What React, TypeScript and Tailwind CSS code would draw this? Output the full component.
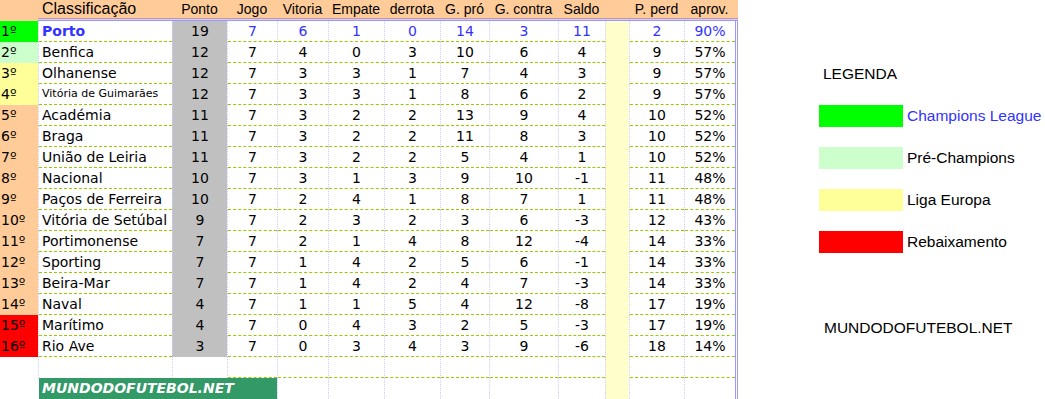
import type { ReactNode } from 'react';

interface TeamRow {
  pos: number;
  name: string;
  stats: number[]; // pontos, jogos, vitorias, empates, derrotas, gols pro, gols contra, saldo
  lost: number;
  pct: string;
  zone: string;
  leader?: boolean;
  small?: boolean;
}

const teams: TeamRow[] = [
  { pos: 1, name: 'Porto', stats: [19, 7, 6, 1, 0, 14, 3, 11], lost: 2, pct: '90%', zone: 'bg-[#00ff00]', leader: true },
  { pos: 2, name: 'Benfica', stats: [12, 7, 4, 0, 3, 10, 6, 4], lost: 9, pct: '57%', zone: 'bg-[#ccffcc]' },
  { pos: 3, name: 'Olhanense', stats: [12, 7, 3, 3, 1, 7, 4, 3], lost: 9, pct: '57%', zone: 'bg-[#ffff99]' },
  { pos: 4, name: 'Vitória de Guimarães', stats: [12, 7, 3, 3, 1, 8, 6, 2], lost: 9, pct: '57%', zone: 'bg-[#ffff99]', small: true },
  { pos: 5, name: 'Académia', stats: [11, 7, 3, 2, 2, 13, 9, 4], lost: 10, pct: '52%', zone: 'bg-[#ffcc99]' },
  { pos: 6, name: 'Braga', stats: [11, 7, 3, 2, 2, 11, 8, 3], lost: 10, pct: '52%', zone: 'bg-[#ffcc99]' },
  { pos: 7, name: 'União de Leiria', stats: [11, 7, 3, 2, 2, 5, 4, 1], lost: 10, pct: '52%', zone: 'bg-[#ffcc99]' },
  { pos: 8, name: 'Nacional', stats: [10, 7, 3, 1, 3, 9, 10, -1], lost: 11, pct: '48%', zone: 'bg-[#ffcc99]' },
  { pos: 9, name: 'Paços de Ferreira', stats: [10, 7, 2, 4, 1, 8, 7, 1], lost: 11, pct: '48%', zone: 'bg-[#ffcc99]' },
  { pos: 10, name: 'Vitória de Setúbal', stats: [9, 7, 2, 3, 2, 3, 6, -3], lost: 12, pct: '43%', zone: 'bg-[#ffcc99]' },
  { pos: 11, name: 'Portimonense', stats: [7, 7, 2, 1, 4, 8, 12, -4], lost: 14, pct: '33%', zone: 'bg-[#ffcc99]' },
  { pos: 12, name: 'Sporting', stats: [7, 7, 1, 4, 2, 5, 6, -1], lost: 14, pct: '33%', zone: 'bg-[#ffcc99]' },
  { pos: 13, name: 'Beira-Mar', stats: [7, 7, 1, 4, 2, 4, 7, -3], lost: 14, pct: '33%', zone: 'bg-[#ffcc99]' },
  { pos: 14, name: 'Naval', stats: [4, 7, 1, 1, 5, 4, 12, -8], lost: 17, pct: '19%', zone: 'bg-[#ffcc99]' },
  { pos: 15, name: 'Marítimo', stats: [4, 7, 0, 4, 3, 2, 5, -3], lost: 17, pct: '19%', zone: 'bg-[#ff0000]' },
  { pos: 16, name: 'Rio Ave', stats: [3, 7, 0, 3, 4, 3, 9, -6], lost: 18, pct: '14%', zone: 'bg-[#ff0000]' },
];

// widths of the stat columns, Ponto first
const statCols = [
  { label: 'Ponto', w: 'w-[55px]' },
  { label: 'Jogo', w: 'w-[50px]' },
  { label: 'Vitoria', w: 'w-[51px]' },
  { label: 'Empate', w: 'w-[56px]' },
  { label: 'derrota', w: 'w-[56px]' },
  { label: 'G. pró', w: 'w-[49px]' },
  { label: 'G. contra', w: 'w-[69px]' },
  { label: 'Saldo', w: 'w-[47px]' },
];

const legend = [
  { label: 'Champions League', bg: 'bg-[#00ff00]', text: 'text-[#3333ff]' },
  { label: 'Pré-Champions', bg: 'bg-[#ccffcc]', text: 'text-black' },
  { label: 'Liga Europa', bg: 'bg-[#ffff99]', text: 'text-black' },
  { label: 'Rebaixamento', bg: 'bg-[#ff0000]', text: 'text-black' },
];

interface CellProps {
  width: string;
  bg?: string;
  line?: boolean;
  align?: 'left' | 'center';
  children?: ReactNode;
}

function Cell({ width, bg = '', line = true, align = 'center', children }: CellProps) {
  return (
    <div className={`${width} h-full shrink-0 border-l border-dotted border-[#ccccff] ${bg}`}>
      <div
        className={`h-full flex items-center whitespace-nowrap ${
          align === 'left' ? 'pl-[3px]' : 'justify-center'
        } ${line ? 'border-b border-dashed border-[#99cc00]' : ''}`}
      >
        {children}
      </div>
    </div>
  );
}

function Header() {
  return (
    <div className="flex h-[21px] w-[738px] bg-[#ffcc99] font-['Liberation_Sans',Arial,sans-serif] text-[14px] text-black">
      <div className="w-[38px] shrink-0" />
      <div className="flex flex-1 border-b-[3px] border-double border-[#9999ff]">
        <div className="w-[134px] shrink-0 pl-[4px] text-[16px] leading-[18px]">Classificação</div>
        {statCols.map((c) => (
          <div key={c.label} className={`${c.w} shrink-0 text-center leading-[18px]`}>
            {c.label}
          </div>
        ))}
        <div className="w-[24px] shrink-0" />
        <div className="w-[55px] shrink-0 text-center leading-[18px]">P. perd</div>
        <div className="w-[51px] shrink-0 text-center leading-[18px]">aprov.</div>
      </div>
    </div>
  );
}

function StandingRow({ team }: { team: TeamRow }) {
  const numColor = team.leader ? 'text-[#3333ff]' : 'text-black';
  return (
    <div className="flex h-[21px]">
      <div className={`w-[38px] h-full shrink-0 pl-[1px] flex items-center ${team.zone}`}>
        {team.pos}º
      </div>
      <Cell width="w-[134px]" align="left">
        {team.leader ? (
          <span className="font-bold text-[#3333ff]">{team.name}</span>
        ) : (
          <span className={team.small ? 'text-[11px]' : ''}>{team.name}</span>
        )}
      </Cell>
      {statCols.map((c, i) => (
        <Cell key={c.label} width={c.w} bg={i === 0 ? 'bg-[#c0c0c0]' : ''} line={i !== 0}>
          <span className={i === 0 ? 'text-black' : numColor}>{team.stats[i]}</span>
        </Cell>
      ))}
      <Cell width="w-[24px]" bg="bg-[#ffffcc]" line={false} />
      <Cell width="w-[55px]">
        <span className={numColor}>{team.lost}</span>
      </Cell>
      <div className="h-full border-r-[3px] border-double border-[#9999ff]">
        <Cell width="w-[51px]">
          <span className={numColor}>{team.pct}</span>
        </Cell>
      </div>
    </div>
  );
}

export default function App() {
  return (
    <div className="w-[1045px] h-[399px] overflow-hidden bg-white flex font-['DejaVu_Sans',Verdana,sans-serif] text-[14px] text-black">
      <div className="w-[738px] shrink-0">
        <Header />
        {teams.map((t) => (
          <StandingRow key={t.pos} team={t} />
        ))}

        {/* empty row */}
        <div className="flex h-[21px]">
          <div className="w-[38px] shrink-0" />
          <Cell width="w-[134px]" line={false} />
          <Cell width="w-[55px]" line={false} />
          {statCols.slice(1).map((c) => (
            <Cell key={c.label} width={c.w} />
          ))}
          <Cell width="w-[24px]" bg="bg-[#ffffcc]" line={false} />
          <Cell width="w-[55px]" />
          <div className="h-full border-r-[3px] border-double border-[#9999ff]">
            <Cell width="w-[51px]" />
          </div>
        </div>

        {/* site banner row */}
        <div className="flex h-[21px]">
          <div className="w-[38px] shrink-0" />
          <div className="w-[239px] h-full shrink-0 pl-[1px]">
            <div className="h-full bg-[#339966] pl-[3px] flex items-center font-bold italic text-white">
              MUNDODOFUTEBOL.NET
            </div>
          </div>
          {statCols.slice(2).map((c) => (
            <Cell key={c.label} width={c.w} line={false} />
          ))}
          <Cell width="w-[24px]" bg="bg-[#ffffcc]" line={false} />
          <Cell width="w-[55px]" line={false} />
          <div className="h-full border-r-[3px] border-double border-[#9999ff]">
            <Cell width="w-[51px]" line={false} />
          </div>
        </div>
      </div>

      {/* legend */}
      <div className="ml-[81px] pt-[65px] flex flex-col font-['Liberation_Sans',Arial,sans-serif] text-[15.5px]">
        <div className="pl-[4px] leading-[18px]">LEGENDA</div>
        <div className="mt-[22px] flex flex-col gap-[20px]">
          {legend.map((l) => (
            <div key={l.label} className="flex items-center gap-[4px] h-[22px]">
              <div className={`w-[84px] h-[22px] ${l.bg}`} />
              <span className={l.text}>{l.label}</span>
            </div>
          ))}
        </div>
        <div className="mt-[66px] pl-[5px] leading-[18px]">MUNDODOFUTEBOL.NET</div>
      </div>
    </div>
  );
}
